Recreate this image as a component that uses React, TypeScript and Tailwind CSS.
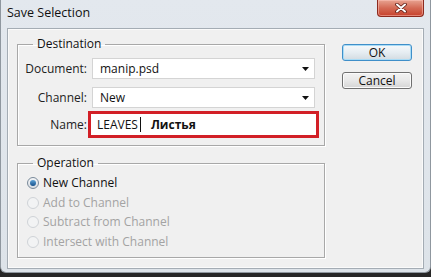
import React from 'react';

const font = { fontFamily: '"Open Sans", "Noto Sans", sans-serif' };

function Arrow() {
  return (
    <svg width="7" height="4" viewBox="0 0 7 4" className="shrink-0">
      <path d="M0 0h7L3.5 4z" fill="#111" />
    </svg>
  );
}

function CloseButton() {
  return (
    <div className="absolute right-0 top-0 w-[47px] h-[17px] rounded-b-[4px] border border-t-0 border-[#8c2a1e] bg-gradient-to-b from-[#e7a391] via-[#d46a55] to-[#c6402b] flex items-center justify-center shadow-[inset_0_0_0_1px_rgba(255,200,190,0.5)]">
      <svg width="12" height="10" viewBox="0 0 12 10">
        <path d="M2 1.5l8 7M10 1.5l-8 7" stroke="#5a1a12" strokeWidth="3.6" strokeLinecap="round" />
        <path d="M2 1.5l8 7M10 1.5l-8 7" stroke="#fff" strokeWidth="2" strokeLinecap="round" />
      </svg>
    </div>
  );
}

function SelectField({ label, value }: { label: string; value: string }) {
  return (
    <div className="flex items-center h-[21px]">
      <span className="w-[69px] text-right text-[12px] text-[#222]">{label}</span>
      <div className="ml-[5px] w-[223px] h-full bg-white border border-[#d4d4d4] flex items-center pl-[7px] pr-[5px]">
        <span className="flex-1 text-[12px] text-[#111]">{value}</span>
        <Arrow />
      </div>
    </div>
  );
}

function Radio({ label, checked, disabled }: { label: string; checked?: boolean; disabled?: boolean }) {
  return (
    <div className="flex items-center h-[19.7px]">
      {checked ? (
        <span className="ml-[9px] w-[12px] h-[12px] rounded-full border border-[#7a8a9a] bg-gradient-to-b from-[#f4f6f8] to-[#d7dde3] flex items-center justify-center">
          <span className="w-[6px] h-[6px] rounded-full bg-gradient-to-b from-[#5ea4d8] to-[#14508a]" />
        </span>
      ) : (
        <span className="ml-[9px] w-[12px] h-[12px] rounded-full border border-[#cfd3d7] bg-[#f2f3f4]" />
      )}
      <span className={`ml-[4px] text-[12px] ${disabled ? 'text-[#a3a3a3]' : 'text-[#111]'}`}>{label}</span>
    </div>
  );
}

export default function App() {
  return (
    <div className="w-[431px] h-[277px] bg-[#262626] overflow-hidden" style={font}>
      <div className="h-[273px] bg-gradient-to-b from-[#e3e8ee] to-[#dde3e9] rounded-b-[6px] border-x border-b border-[#8f979f] flex flex-col px-[6px] pb-[3px]">
        {/* Title bar */}
        <div className="h-[28px] relative shrink-0">
          <span className="block pt-[4px] text-[12.5px] text-[#111]">Save Selection</span>
          <CloseButton />
        </div>

        {/* Client area */}
        <div className="flex-1 border border-[#a4acb4] bg-[#f0f0f0] flex shadow-[inset_0_0_0_1px_#fafafa]">
          <div className="pl-[9px] pt-[7px] flex flex-col">
            {/* Destination */}
            <fieldset className="w-[308px] h-[110px] border border-[#a8a8a8] shadow-[1px_1px_0_#fff,inset_1px_1px_0_#fff]">
              <legend className="ml-[15px] px-[4px] text-[12px] leading-[16px] text-[#111]">Destination</legend>
              <div className="pt-[6px] flex flex-col">
                <SelectField label="Document:" value="manip.psd" />
                <div className="mt-[8px]">
                  <SelectField label="Channel:" value="New" />
                </div>
                <div className="mt-[3px] flex items-center h-[27px]">
                  <span className="w-[69px] text-right text-[12px] text-[#222]">Name:</span>
                  <div className="ml-[1px] w-[231px] h-full bg-white border-[3px] border-[#d21f26] flex items-center pl-[6px]">
                    <span className="text-[12px] text-[#111]">LEAVES</span>
                    <span className="ml-[2px] w-px h-[15px] bg-[#111]" />
                    <span className="ml-[10px] text-[12px] font-bold text-[#111]">Листья</span>
                  </div>
                </div>
              </div>
            </fieldset>

            {/* Operation */}
            <fieldset className="mt-[9px] w-[308px] h-[103px] border border-[#a8a8a8] shadow-[1px_1px_0_#fff,inset_1px_1px_0_#fff]">
              <legend className="ml-[15px] px-[4px] text-[12px] leading-[16px] text-[#111]">Operation</legend>
              <div className="pt-[2px] flex flex-col">
                <Radio label="New Channel" checked />
                <Radio label="Add to Channel" disabled />
                <Radio label="Subtract from Channel" disabled />
                <Radio label="Intersect with Channel" disabled />
              </div>
            </fieldset>
          </div>

          {/* Buttons */}
          <div className="ml-[17px] pt-[15px] flex flex-col gap-[11px]">
            <button className="w-[70px] h-[17px] rounded-[3px] border border-[#3f8fc9] bg-gradient-to-b from-[#f6f9fb] via-[#e6edf2] to-[#d3dbe1] shadow-[inset_0_0_0_1px_#a9dcf6] text-[12px] leading-none text-[#111] flex items-center justify-center">
              OK
            </button>
            <button className="w-[70px] h-[17px] rounded-[3px] border border-[#707070] bg-gradient-to-b from-[#f3f3f3] via-[#e8e8e8] to-[#d5d5d5] shadow-[inset_0_0_0_1px_#fbfbfb] text-[12px] leading-none text-[#111] flex items-center justify-center">
              Cancel
            </button>
          </div>
        </div>
      </div>
    </div>
  );
}
